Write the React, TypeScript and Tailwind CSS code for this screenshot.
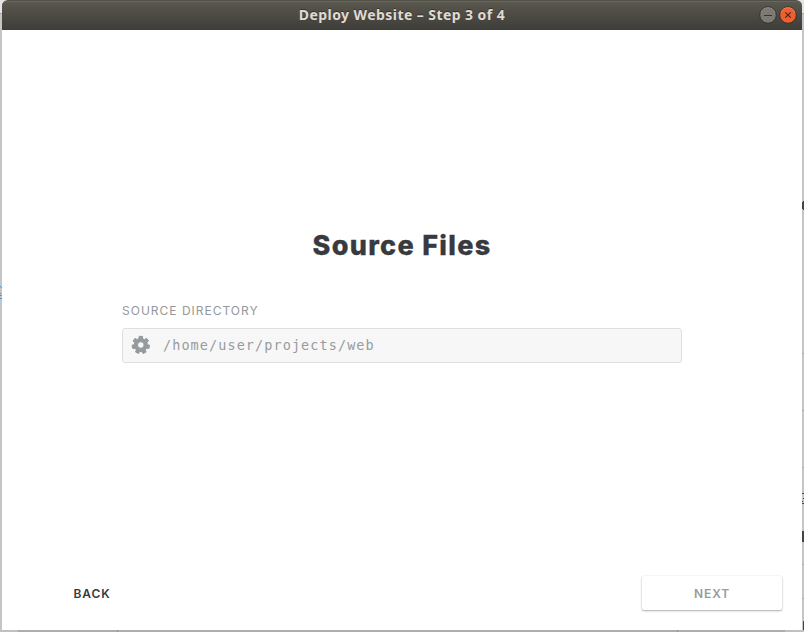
const TEETH = 7;

function gearPath(): string {
  const points: string[] = [];
  const at = (r: number, a: number) =>
    `${(9.8 + r * Math.sin(a)).toFixed(2)} ${(10 - r * Math.cos(a)).toFixed(2)}`;
  for (let i = 0; i < TEETH; i++) {
    const a = (i * 2 * Math.PI) / TEETH;
    points.push(at(6.6, a - 0.28), at(8.8, a - 0.19), at(8.8, a + 0.19), at(6.6, a + 0.28));
  }
  return `M${points.join("L")}Z M9.8 6.7a3.3 3.3 0 1 0 0 6.6a3.3 3.3 0 1 0 0-6.6Z`;
}

function Gear() {
  return (
    <svg width="20" height="20" viewBox="0 0 20 20" className="mb-[2px] shrink-0">
      <path d={gearPath()} fill="#959a9d" stroke="#959a9d" strokeWidth="1" strokeLinejoin="round" fillRule="evenodd" />
    </svg>
  );
}

function TitleBar() {
  return (
    <header className="grid h-[30px] w-[800px] grid-cols-[1fr_auto_1fr] items-center rounded-t-[6px] border-t border-[#515049] bg-linear-to-b from-[#5b584f] to-[#3e3d38] shadow-[inset_0_1px_0_#69665c]">
      <span />
      <h1 className="mb-[2px] whitespace-nowrap font-['Noto_Sans',sans-serif] text-[14px] leading-5 font-bold text-[#dfdbd2] [text-shadow:0_-1px_0_#33322e]">
        <span className="inline-block w-[207px] text-center tracking-[0.43px]">Deploy Website – Step 3 of 4</span>
      </h1>
      <div className="mb-px flex justify-end gap-[2px] pr-[5px]">
        <svg width="18" height="18" viewBox="0 0 18 18">
          <circle cx="9" cy="9" r="8.3" fill="#7c7a73" stroke="#35342f" />
          <path d="M2 6.5A7.5 7.5 0 0 1 16 6.5" fill="none" stroke="#96938b" strokeWidth=".7" />
          <path d="M5 9.5h8" stroke="#35342f" />
        </svg>
        <svg width="18" height="18" viewBox="0 0 18 18">
          <circle cx="9" cy="9" r="8.3" fill="#ed5e31" stroke="#3d322b" />
          <path d="M2 6.5A7.5 7.5 0 0 1 16 6.5" fill="none" stroke="#fa9068" strokeWidth=".7" />
          <path d="M6.3 6.3l5.4 5.4M11.7 6.3l-5.4 5.4" stroke="#472817" strokeWidth="1.2" />
        </svg>
      </div>
    </header>
  );
}

function Backdrop() {
  return (
    <svg width="804" height="632" className="absolute inset-0">
      <rect width="804" height="632" fill="#c5c5c5" />
      <path d="M0 0h12v13H0zM792 0h12v13h-12z" fill="#e4e4e4" />
      <path d="M0 13.5h2M802 13.5h2M802 353.5h2M802 410.5h2M802 467.5h2M802 564.5h2M802 598.5h2" stroke="#aaa" />
      <path d="M0 286.5h1M1 287.5h1M0 293.5h1M0 295.5h2M0 298.5h2" stroke="#3d9fd4" />
      <path d="M802 202h1v-1h1v9h-1v-1h-1zM802 531h2v11h-2zM803 621h1v9h-1z" fill="#444" />
      <path d="M802 493.5h2M803 498.5h1M802 501.5h1M802 503.5h2" stroke="#444" />
      <rect y="630" width="804" height="2" fill="#adadad" />
      <path d="M0 630h18v2H0zM785 630h19v2h-19z" fill="#c0c0c0" />
      <path d="M117.5 630v2M677.5 630v2" stroke="#929292" />
    </svg>
  );
}

export default function App() {
  return (
    <div className="relative h-[632px] w-[804px] overflow-hidden px-[2px] font-['Inter',sans-serif]">
      <Backdrop />
      <div className="relative flex h-[630px] w-[800px] flex-col">
        <TitleBar />
        <main className="flex grow flex-col bg-white">
          <h2 className="mt-[197px] text-center text-[27px] leading-[38px] font-extrabold tracking-[1.3px] text-[#373a3e] [-webkit-text-stroke:0.3px_#373a3e]">
            Source Files
          </h2>
          <section className="mx-auto mt-[38px] w-[560px]">
            <p className="text-[12px] leading-[16px] tracking-[1px] text-[#93989b]">SOURCE DIRECTORY</p>
            <div className="mt-[9px] flex h-[35px] items-center gap-[12px] rounded-[3px] border border-[#dedfe0] bg-[#f7f7f7] pl-[8px]">
              <Gear />
              <span className="mb-px font-['DejaVu_Sans_Mono',monospace] text-[13.5px] leading-5 tracking-[1.08px] text-[#979b9e]">
                /home/user/projects/web
              </span>
            </div>
          </section>
          <footer className="mt-auto mb-[20px] flex justify-between px-[20px] text-[12px] font-semibold tracking-[0.9px]">
            <button className="h-[34px] w-[140px] pt-[2px] text-[#373a3e]">BACK</button>
            <button className="h-[34px] w-[140px] rounded-[2px] pt-[2px] text-[#979b9e] shadow-[0_0_2px_rgba(0,0,0,0.1),0_1px_2px_rgba(0,0,0,0.3)]">
              NEXT
            </button>
          </footer>
        </main>
      </div>
    </div>
  );
}
